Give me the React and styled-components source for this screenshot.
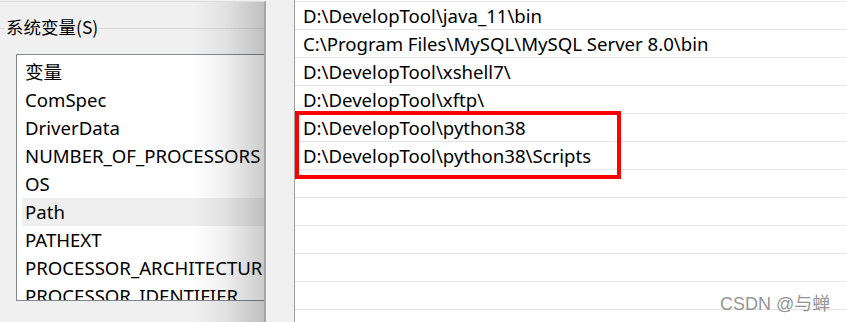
import React from 'react';
import styled, { createGlobalStyle } from 'styled-components';

const GlobalStyle = createGlobalStyle`
  html, body {
    margin: 0;
    padding: 0;
    background: #f0f0f0;
  }
  body {
    font-family: 'Noto Sans', 'Noto Sans CJK SC', sans-serif;
    color: #000;
  }
`;

const variables = [
  'ComSpec',
  'DriverData',
  'NUMBER_OF_PROCESSORS',
  'OS',
  'Path',
  'PATHEXT',
  'PROCESSOR_ARCHITECTURE',
  'PROCESSOR_IDENTIFIER',
];

const pathEntries = [
  'D:\\DevelopTool\\java_11\\bin',
  'C:\\Program Files\\MySQL\\MySQL Server 8.0\\bin',
  'D:\\DevelopTool\\xshell7\\',
  'D:\\DevelopTool\\xftp\\',
  'D:\\DevelopTool\\python38',
  'D:\\DevelopTool\\python38\\Scripts',
  '',
  '',
  '',
  '',
  '',
  '',
];

const App = () => (
  <>
    <GlobalStyle />
    <Page>
      <LeftPanel>
        <GroupHeader>
          <GroupLine $short />
          <GroupLabel>系统变量(S)</GroupLabel>
          <GroupLine />
        </GroupHeader>
        <ListBox>
          <VarRow>变量</VarRow>
          {variables.map((name) => (
            <VarRow key={name} $selected={name === 'Path'}>
              {name}
            </VarRow>
          ))}
        </ListBox>
      </LeftPanel>
      <Gutter />
      <PathPanel>
        {pathEntries.map((entry, i) => (
          <PathRow key={i}>{entry}</PathRow>
        ))}
        <Highlight />
        <Watermark>CSDN @与蝉</Watermark>
      </PathPanel>
    </Page>
  </>
);

const Page = styled.div`
  display: flex;
  width: 847px;
  height: 322px;
  overflow: hidden;
  background: #f0f0f0;
  font-size: 18.6px;
`;

const LeftPanel = styled.div`
  position: relative;
  width: 264px;
  flex-shrink: 0;
  display: flex;
  flex-direction: column;
  border-top: 1px solid #dedede;
  margin-top: 1px;
  border-right: 2px solid #a6a6a6;
  overflow: hidden;

  &::after {
    content: '';
    position: absolute;
    top: 0;
    right: 0;
    bottom: 0;
    width: 72px;
    background: linear-gradient(
      to right,
      rgba(0, 0, 0, 0) 0%,
      rgba(0, 0, 0, 0.06) 45%,
      rgba(0, 0, 0, 0.2) 100%
    );
    pointer-events: none;
  }
`;

const GroupHeader = styled.div`
  display: flex;
  align-items: center;
  height: 50px;
  padding-bottom: 2px;
`;

const GroupLabel = styled.span`
  font-family: 'Noto Sans CJK SC', 'Noto Sans', sans-serif;
  font-size: 17.5px;
  line-height: 24px;
  padding: 0 1px;
  white-space: nowrap;
`;

const GroupLine = styled.div`
  height: 1px;
  background: #dcdcdc;
  margin-top: 2px;
  width: ${(p) => (p.$short ? '5px' : 'auto')};
  flex: ${(p) => (p.$short ? '0 0 5px' : '1')};
`;

const ListBox = styled.div`
  margin-left: 16px;
  height: 247px;
  background: #fff;
  border: 1px solid #828790;
  border-right: none;
  padding-top: 3px;
  box-sizing: border-box;
  overflow: hidden;
`;

const VarRow = styled.div`
  height: 28px;
  line-height: 28px;
  margin-left: 5px;
  padding-left: 3px;
  white-space: nowrap;
  background: ${(p) => (p.$selected ? '#efefef' : 'transparent')};
`;

const Gutter = styled.div`
  width: 28px;
  flex-shrink: 0;
  background: #f0f0f0;
`;

const PathPanel = styled.div`
  position: relative;
  flex: 1;
  background: #fff;
  border-left: 1px solid #a0a0a0;
  padding-top: 1px;
  overflow: hidden;
`;

const PathRow = styled.div`
  height: 27px;
  line-height: 27px;
  border-top: 1px solid #e6e6e6;
  padding-left: 8px;
  white-space: nowrap;
`;

const Highlight = styled.div`
  position: absolute;
  left: 0;
  top: 111px;
  width: 326px;
  height: 68px;
  border: 4px solid #ff0000;
  box-sizing: border-box;
`;

const Watermark = styled.div`
  position: absolute;
  left: 425px;
  top: 292px;
  font-family: 'Liberation Sans', 'Noto Sans CJK SC', sans-serif;
  font-size: 18px;
  line-height: 24px;
  color: rgba(120, 120, 120, 0.8);
  white-space: nowrap;
`;

export default App;
